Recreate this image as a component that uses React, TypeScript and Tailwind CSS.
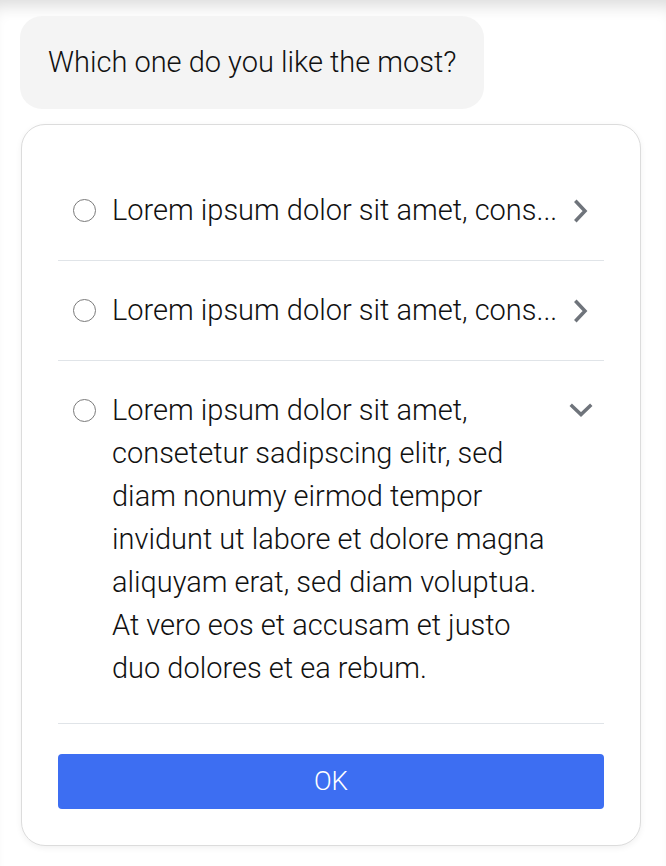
const font = { fontFamily: "Roboto, 'Liberation Sans', sans-serif" };

function Radio() {
  return <span className="mt-[10px] h-[23px] w-[23px] shrink-0 rounded-full border-[1.5px] border-[#7a7a7a]" />;
}

function Chevron({ open }: { open?: boolean }) {
  return (
    <svg width="26" height="26" viewBox="0 0 26 26" fill="none" stroke="#6f747b" strokeWidth="3.5" strokeLinecap="square">
      {open ? <polyline points="4,8 13,16.5 22,8" /> : <polyline points="8.5,4 17,13 8.5,22" />}
    </svg>
  );
}

function OptionRow({ text, open }: { text: string; open?: boolean }) {
  return (
    <div className={`flex items-start border-b-[1.5px] border-[#e0e4e8] pl-[15px] pr-[10px] ${open ? "pt-[28px] pb-[33px]" : "py-[28px]"}`}>
      <Radio />
      <p className={`ml-[16px] w-[446px] text-[29px] font-light leading-[43px] text-[#111] ${open ? "" : "whitespace-nowrap"}`}>
        {text}
      </p>
      <div className="ml-auto mt-[9px]">
        <Chevron open={open} />
      </div>
    </div>
  );
}

export default function App() {
  const lorem =
    "Lorem ipsum dolor sit amet, consetetur sadipscing elitr, sed diam nonumy eirmod tempor invidunt ut labore et dolore magna aliquyam erat, sed diam voluptua. At vero eos et accusam et justo duo dolores et ea rebum.";
  const short = "Lorem ipsum dolor sit amet, cons...";

  return (
    <div className="min-h-[866px] bg-white px-[20px] pt-[16px] shadow-[inset_0_16px_16px_-10px_rgba(0,0,0,0.14)]" style={font}>
      <div className="inline-flex h-[93px] items-center rounded-[22px] bg-[#f4f4f4] px-[28px] text-[29px] font-light text-[#111]">
        Which one do you like the most?
      </div>

      <div className="mt-[15px] mr-[5px] ml-[1px] rounded-[24px] border-[1.5px] border-[#dcdcdc] bg-white px-[36px] pt-[36px] pb-[36px] shadow-[0_2px_6px_rgba(0,0,0,0.06)]">
        <OptionRow text={short} />
        <OptionRow text={short} />
        <OptionRow text={lorem} open />
        <button className="mt-[30px] h-[55px] w-full rounded-[4px] bg-[#3d6ef2] text-[26px] font-light text-white">
          OK
        </button>
      </div>
    </div>
  );
}
